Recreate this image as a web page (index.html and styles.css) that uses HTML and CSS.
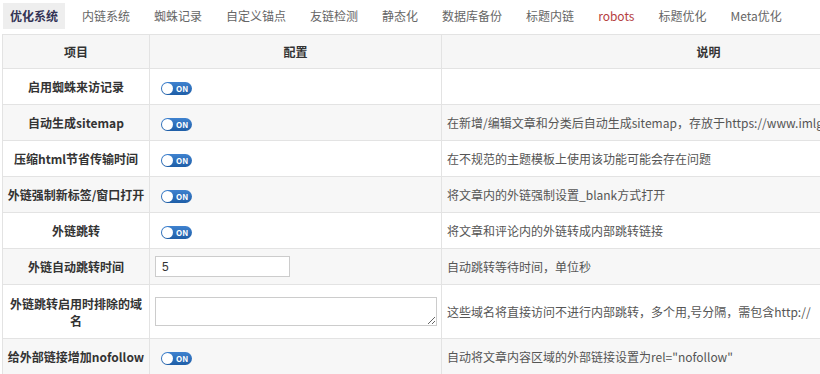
FILE: index.html
```html
<!DOCTYPE html>
<html>
<head>
    <title>SEO设置</title>
    <link rel="stylesheet" href="styles.css">
</head>
<body>
    <div class="tabs">
        <span class="tab active">优化系统</span>
        <span class="tab">内链系统</span>
        <span class="tab">蜘蛛记录</span>
        <span class="tab">自定义锚点</span>
        <span class="tab">友链检测</span>
        <span class="tab">静态化</span>
        <span class="tab">数据库备份</span>
        <span class="tab">标题内链</span>
        <span class="tab red">robots</span>
        <span class="tab">标题优化</span>
        <span class="tab">Meta优化</span>
    </div>
    <table class="grid">
        <colgroup>
            <col class="c1">
            <col class="c2">
            <col class="c3">
        </colgroup>
        <thead>
            <tr>
                <th>项目</th>
                <th>配置</th>
                <th>说明</th>
            </tr>
        </thead>
        <tbody>
            <tr>
                <td class="label">启用蜘蛛来访记录</td>
                <td><span class="switch"><i></i>ON</span></td>
                <td class="desc"></td>
            </tr>
            <tr>
                <td class="label">自动生成sitemap</td>
                <td><span class="switch"><i></i>ON</span></td>
                <td class="desc">在新增/编辑文章和分类后自动生成sitemap，存放于https://www.imlgm.com/sitemap.xml</td>
            </tr>
            <tr>
                <td class="label">压缩html节省传输时间</td>
                <td><span class="switch"><i></i>ON</span></td>
                <td class="desc">在不规范的主题模板上使用该功能可能会存在问题</td>
            </tr>
            <tr>
                <td class="label">外链强制新标签/窗口打开</td>
                <td><span class="switch"><i></i>ON</span></td>
                <td class="desc">将文章内的外链强制设置_blank方式打开</td>
            </tr>
            <tr>
                <td class="label">外链跳转</td>
                <td><span class="switch"><i></i>ON</span></td>
                <td class="desc">将文章和评论内的外链转成内部跳转链接</td>
            </tr>
            <tr>
                <td class="label">外链自动跳转时间</td>
                <td><input class="field" type="text" value="5"></td>
                <td class="desc">自动跳转等待时间，单位秒</td>
            </tr>
            <tr class="tall">
                <td class="label">外链跳转启用时排除的域名</td>
                <td><textarea class="area"></textarea></td>
                <td class="desc">这些域名将直接访问不进行内部跳转，多个用,号分隔，需包含http://</td>
            </tr>
            <tr>
                <td class="label">给外部链接增加nofollow</td>
                <td><span class="switch"><i></i>ON</span></td>
                <td class="desc">自动将文章内容区域的外部链接设置为rel="nofollow"</td>
            </tr>
        </tbody>
    </table>
</body>
</html>
```

FILE: styles.css
```css
body {
    margin: 0;
    padding: 0 0 0 2px;
    overflow: hidden;
    font-family: "Noto Sans CJK SC", "Liberation Sans", sans-serif;
    font-size: 12px;
    color: #555;
    background: #fff;
}

.tabs {
    display: flex;
    padding: 3px 0 0 1px;
    height: 32px;
    box-sizing: border-box;
}

.tab {
    padding: 0 7px;
    margin-right: 10px;
    height: 26px;
    line-height: 26px;
    white-space: nowrap;
    color: #666;
}

.tab.active {
    background: #eeeeee;
    color: #335;
    font-weight: bold;
}

.tab.red {
    color: #b5403f;
}

.grid {
    margin-top: 2px;
    border-collapse: collapse;
    table-layout: fixed;
    width: 973px;
}

.c1 { width: 147px; }
.c2 { width: 292px; }
.c3 { width: 534px; }

th,
td {
    border: 1px solid #e3e3e3;
    padding: 0 5px;
    height: 35px;
}

th {
    background: #f6f6f6;
    color: #333;
    font-weight: bold;
    text-align: center;
    height: 33px;
}

tbody tr:nth-child(even) td {
    background: #f7f7f7;
}

.label {
    text-align: center;
    font-weight: bold;
    color: #333;
    padding: 0 3px;
}

.desc {
    color: #555;
    white-space: nowrap;
}

.tall td {
    height: 53px;
}

.switch {
    display: inline-flex;
    align-items: center;
    margin-left: 6px;
    width: 31px;
    height: 13px;
    border-radius: 7px;
    background: linear-gradient(#3f82cf, #1e5ea7);
    color: #fff;
    font-size: 8px;
    font-weight: bold;
    line-height: 13px;
    box-sizing: border-box;
    padding: 0 1px;
    vertical-align: middle;
}

.switch i {
    width: 11px;
    height: 11px;
    border-radius: 50%;
    background: #fff;
    margin-right: 3px;
}

.field {
    display: block;
    width: 135px;
    height: 21px;
    box-sizing: border-box;
    border: 1px solid #ccc;
    padding: 0 6px;
    font-family: "Liberation Sans", sans-serif;
    font-size: 12px;
    color: #333;
}

.area {
    display: block;
    width: 282px;
    height: 29px;
    box-sizing: border-box;
    border: 1px solid #ccc;
    resize: both;
}
```
